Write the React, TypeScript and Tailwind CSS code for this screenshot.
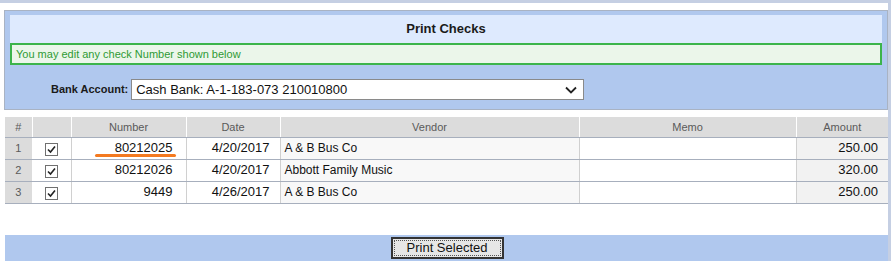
import React from "react";

const rows = [
  { n: 1, num: "80212025", date: "4/20/2017", vendor: "A & B Bus Co", amt: "250.00", mark: true },
  { n: 2, num: "80212026", date: "4/20/2017", vendor: "Abbott Family Music", amt: "320.00" },
  { n: 3, num: "9449", date: "4/26/2017", vendor: "A & B Bus Co", amt: "250.00" },
];

function Check() {
  return (
    <span className="inline-flex h-[13px] w-[13px] items-center justify-center border border-[#707070] bg-white">
      <svg width="9" height="9" viewBox="0 0 9 9">
        <path d="M1 4.5 L3.5 7 L8 1.5" fill="none" stroke="#222" strokeWidth="1.6" />
      </svg>
    </span>
  );
}

export default function App() {
  const cols = [27, 39, 115, 94, 299, 217, 92];
  return (
    <div className="relative h-[261px] w-[891px] overflow-hidden bg-white font-['Liberation_Sans',Arial,sans-serif]">
      <div className="h-[3px] w-full bg-[#c5cfe3]" />
      <div className="flex">
        <div className="w-[888px]">
          {/* panel */}
          <div className="ml-[4px] mt-[7px] w-[884px] border border-[#a9b3c3] bg-[#b0c8ee] px-[5px] pt-[4px] pb-[9px]">
            <div className="flex h-[28px] items-center justify-center bg-[#deeafe] text-[13px] font-bold text-[#1a1a1a]">
              Print Checks
            </div>
            <div className="flex h-[22px] items-center border-2 border-[#3cb44b] bg-[#ebf6ea] pl-[4px] text-[11px] text-[#2e9a34]">
              You may edit any check Number shown below
            </div>
            <div className="mt-[14px] flex items-center">
              <span className="ml-[41px] mr-[3px] text-[11px] font-bold text-[#1a1a1a]">Bank Account:</span>
              <div className="flex h-[21px] w-[453px] items-center justify-between border border-[#8a8a8a] bg-white pl-[4px] pr-[6px] text-[13px] text-[#111]">
                <span>Cash Bank: A-1-183-073 210010800</span>
                <svg width="12" height="8" viewBox="0 0 12 8">
                  <path d="M1 1.5 L6 6.5 L11 1.5" fill="none" stroke="#222" strokeWidth="1.8" />
                </svg>
              </div>
            </div>
          </div>
          {/* table */}
          <table className="ml-[5px] mt-[7px] table-fixed border-collapse text-[12px]" style={{ width: 883 }}>
            <colgroup>
              {cols.map((w, i) => (
                <col key={i} style={{ width: w }} />
              ))}
            </colgroup>
            <thead>
              <tr className="h-[20px] bg-[#dcdcdc] text-[11px] font-normal text-[#5a5a5a]">
                <th className="border-r border-b border-r-white border-b-[#a7afbd] font-normal">#</th>
                <th className="border-r border-b border-r-white border-b-[#a7afbd] font-normal"></th>
                <th className="border-r border-b border-r-white border-b-[#a7afbd] font-normal">Number</th>
                <th className="border-r border-b border-r-white border-b-[#a7afbd] font-normal">Date</th>
                <th className="border-r border-b border-r-white border-b-[#a7afbd] font-normal">Vendor</th>
                <th className="border-r border-b border-r-white border-b-[#a7afbd] font-normal">Memo</th>
                <th className="border-b border-b-[#a7afbd] font-normal">Amount</th>
              </tr>
            </thead>
            <tbody>
              {rows.map((r) => (
                <tr key={r.n} className="h-[22px] text-[#111]">
                  <td className="border-r border-b border-r-white border-b-[#a7afbd] bg-[#dcdcdc] text-center text-[11px] text-[#5a5a5a]">
                    {r.n}
                  </td>
                  <td className="border-r border-b border-r-[#d0d0d0] border-b-[#a7afbd] bg-white pt-[3px] text-center">
                    <Check />
                  </td>
                  <td className="relative border-r border-b border-r-[#d0d0d0] border-b-[#a7afbd] bg-white pr-[13px] text-right text-[13px]">
                    {r.num}
                    {r.mark && (
                      <span className="absolute left-[23px] top-[16px] h-[3px] w-[81px] rounded-full bg-[#f47a20]" />
                    )}
                  </td>
                  <td className="border-r border-b border-r-[#d0d0d0] border-b-[#a7afbd] bg-white pr-[10px] text-right text-[13px]">
                    {r.date}
                  </td>
                  <td className="border-r border-b border-r-[#d0d0d0] border-b-[#a7afbd] bg-[#f8f8f8] pl-[4px] text-[12px]">
                    {r.vendor}
                  </td>
                  <td className="border-r border-b border-r-[#d0d0d0] border-b-[#a7afbd] bg-white"></td>
                  <td className="border-b border-b-[#a7afbd] bg-[#f2f2f2] pr-[10px] text-right text-[13px]">{r.amt}</td>
                </tr>
              ))}
            </tbody>
          </table>
          {/* bottom bar */}
          <div className="ml-[5px] mt-[31px] flex h-[28px] w-[883px] items-start justify-center bg-[#b0c8ee] pt-[2px]">
            <button className="ml-[1px] flex h-[22px] w-[113px] items-center justify-center border-2 border-[#333] bg-[#e6e6e6] p-[1px] text-[13px] text-[#111]">
              <span className="flex h-full w-full items-center justify-center border border-dotted border-[#555]">
                Print Selected
              </span>
            </button>
          </div>
        </div>
        <div className="ml-auto h-[261px] w-[3px] bg-[#c5cfe3]" />
      </div>
    </div>
  );
}
